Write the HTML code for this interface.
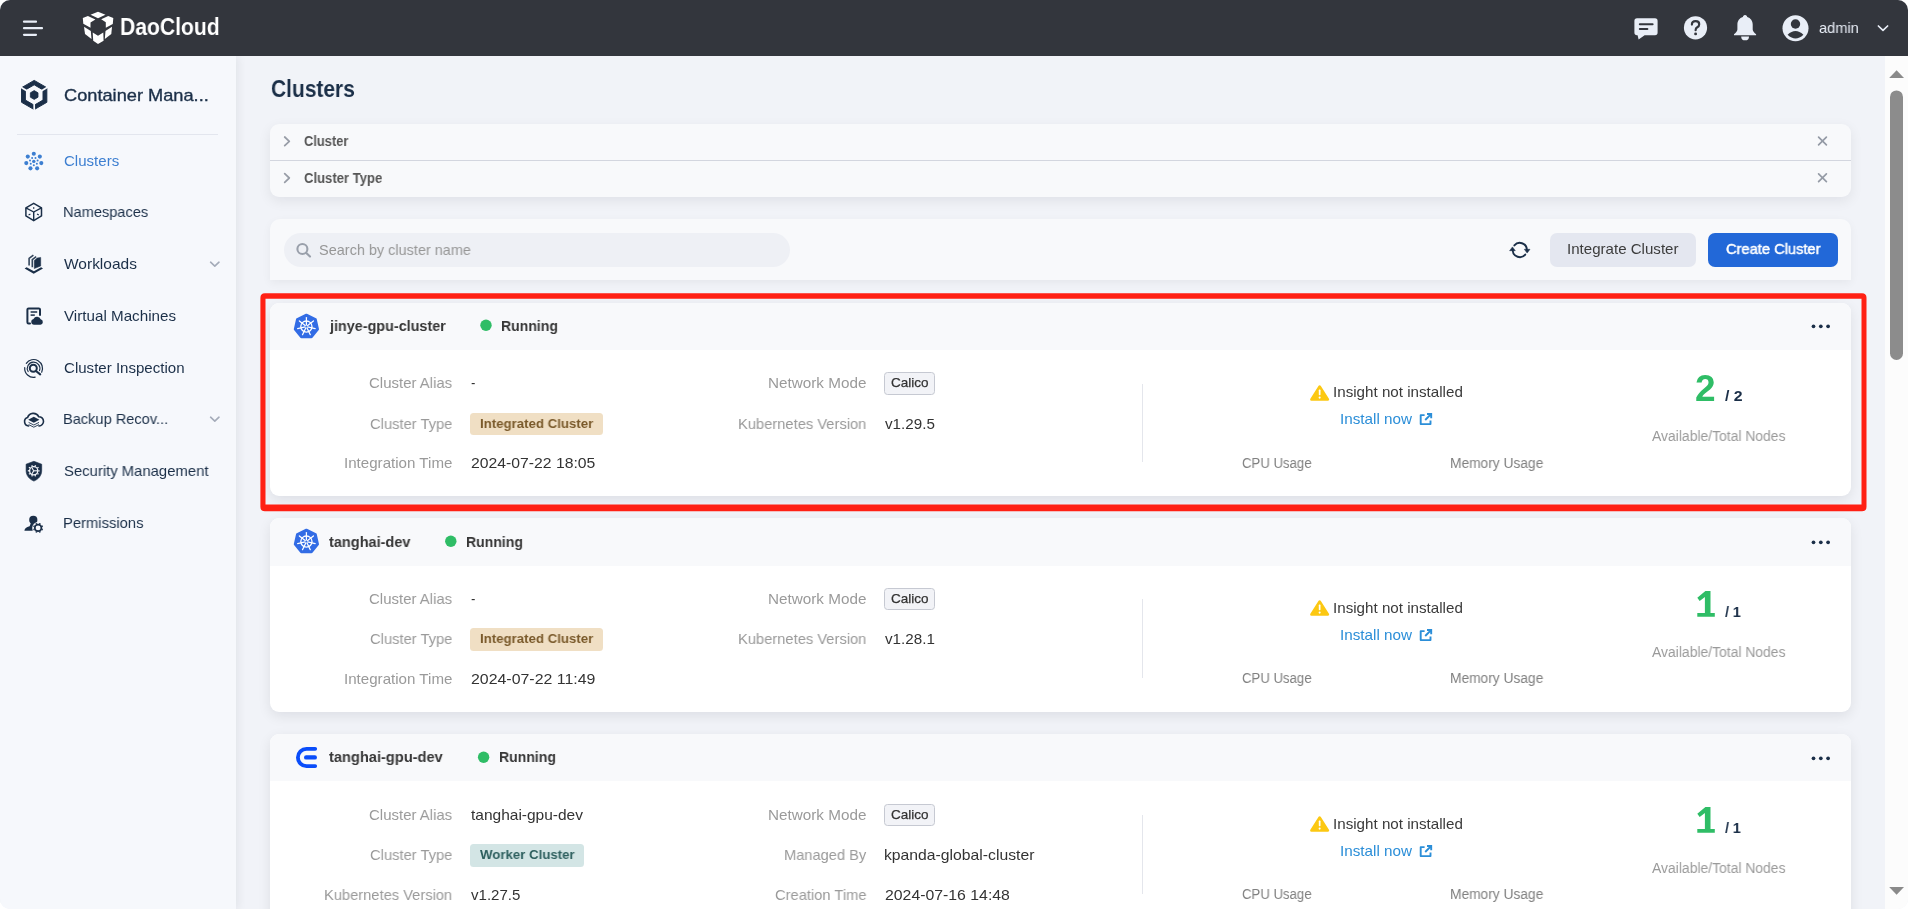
<!DOCTYPE html><html><head><meta charset="utf-8"><title>Clusters</title><style>
*{box-sizing:border-box}
html,body{margin:0;padding:0;background:#fff}
body{width:1908px;height:909px;overflow:hidden;position:relative;font-family:"Liberation Sans",sans-serif}
#app{position:absolute;left:0;top:0;width:1908px;height:909px;border-radius:10px;overflow:hidden;background:#f1f3f8}
.abs{position:absolute}
.t{position:absolute;white-space:pre;line-height:normal;transform-origin:0 0;will-change:transform;font-family:"Liberation Sans",sans-serif}
#hdr{left:0;top:0;width:1908px;height:55.5px;background:#33363d}
#side{left:0;top:55.5px;width:236px;height:854px;background:#f6f8fc;box-shadow:2px 0 9px rgba(20,25,45,.07)}
#sdiv{left:17px;top:133.5px;width:201px;height:1px;background:#e3e6ee}
#sbar{left:1885px;top:55.5px;width:23px;height:854px;background:#fcfcfc}
.card{left:270px;width:1581px;border-radius:9px;background:#fff;box-shadow:0 4px 13px rgba(10,12,22,.085);overflow:hidden}
.card .h{position:absolute;left:0;top:0;width:100%;height:47px;background:#f8f9fb}
#filt{left:270px;top:124.3px;width:1581px;height:72.4px;border-radius:9px;background:#f8f9fb;box-shadow:0 4px 13px rgba(10,12,22,.075)}
#filt i{position:absolute;left:0;top:35.6px;width:100%;height:1px;background:#d3d6df}
#tool{left:270px;top:218.8px;width:1581px;height:61.2px;border-radius:10px 10px 0 0;background:#f8f9fb;box-shadow:0 3px 10px rgba(10,12,22,.05)}
#srch{left:284px;top:233px;width:506px;height:34px;border-radius:17px;background:#eef0f5}
.btn{top:233px;height:34px;border-radius:7px}
.vdiv{left:1142px;width:1px;height:78px;background:#e4e6ec}
.tag{height:21.6px;border-radius:3.5px}
.cal{left:884px;width:51px;height:22.8px;border:1px solid #c6c9d2;border-radius:3.5px;background:#f2f3f7}
#red{left:260.5px;top:293.2px;width:1606px;height:217.3px;border:5px solid #ff2014;border-radius:4px}
</style></head><body><div id="app">
<div class="abs" id="side"></div><div class="abs" id="sdiv"></div>
<div class="abs" id="hdr"></div>
<div class="abs" id="filt"><i></i></div>
<div class="abs" id="tool"></div><div class="abs" id="srch"></div>
<div class="abs btn" style="left:1550px;width:146px;background:#e4e7f0"></div>
<div class="abs btn" style="left:1708px;width:130px;background:#2268d8"></div>
<div class="abs card" style="top:302.5px;height:193px"><div class="h" style="height:47px"></div></div>
<div class="abs vdiv" style="top:384px;height:78px"></div>
<div class="abs cal" style="top:372px;height:22.8px"></div>
<div class="abs tag" style="left:470px;top:413px;height:21.6px;width:132.8px;background:#f0dfc4"></div>
<div class="abs card" style="top:517.75px;height:193.75px"><div class="h" style="height:47.75px"></div></div>
<div class="abs vdiv" style="top:599px;height:79px"></div>
<div class="abs cal" style="top:588px;height:21.6px"></div>
<div class="abs tag" style="left:470px;top:628.25px;height:22.25px;width:132.8px;background:#f0dfc4"></div>
<div class="abs card" style="top:733.75px;height:193.75px"><div class="h" style="height:47px"></div></div>
<div class="abs vdiv" style="top:815px;height:79px"></div>
<div class="abs cal" style="top:804px;height:21.6px"></div>
<div class="abs tag" style="left:470px;top:844.25px;height:22.25px;width:113.8px;background:#d3e5e5"></div>
<div class="abs" id="sbar"></div>
<svg class="abs" style="left:0;top:0" width="1908" height="909" viewBox="0 0 1908 909"><line x1="24" y1="21.7" x2="36" y2="21.7" stroke="#e9eef7" stroke-width="2.2" stroke-linecap="round"/><line x1="24" y1="28.2" x2="42" y2="28.2" stroke="#e9eef7" stroke-width="2.2" stroke-linecap="round"/><line x1="24" y1="34.8" x2="36" y2="34.8" stroke="#e9eef7" stroke-width="2.2" stroke-linecap="round"/><polygon points="90.5,14.7 98,11.8 105.5,14.7 98,18.3" fill="#fff"/><polygon points="82.8,17.9 87.9,15.9 95.4,19.5 90.5,22.4 90.5,27.8 83.3,23.7" fill="#fff"/><polygon points="113.3,17.9 108.2,15.9 101.2,19.3 105.8,22.2 105.8,27.8 112.8,23.9" fill="#fff"/><polygon points="84,26.8 90.8,30.9 91.5,38.9 85,34.1" fill="#fff"/><polygon points="112,26.8 105.5,30.9 104.8,38.9 111.3,34.1" fill="#fff"/><polygon points="92.7,32.6 98,35.8 103.3,32.6 103.6,40.8 98,44 93.2,40.8" fill="#fff"/><path d="M1637 18.3 H1655 Q1657.6 18.3 1657.6 20.9 V32.6 Q1657.6 35.2 1655 35.2 H1644.6 L1638.6 39.6 L1637.6 35.2 H1637 Q1634.4 35.2 1634.4 32.6 V20.9 Q1634.4 18.3 1637 18.3Z" fill="#e9eef7"/><line x1="1639.8" y1="24.3" x2="1652.6" y2="24.3" stroke="#33363d" stroke-width="2" stroke-linecap="round"/><line x1="1639.8" y1="29.1" x2="1647.4" y2="29.1" stroke="#33363d" stroke-width="2" stroke-linecap="round"/><circle cx="1695.5" cy="27.8" r="11.6" fill="#e9eef7"/><path d="M1691.9 24.6 Q1691.9 21.2 1695.6 21.2 Q1699.2 21.2 1699.2 24.3 Q1699.2 26.2 1697.3 27.3 Q1695.6 28.3 1695.6 30.2" fill="none" stroke="#33363d" stroke-width="2.2" stroke-linecap="round"/><circle cx="1695.6" cy="33.9" r="1.45" fill="#33363d"/><path d="M1745 15 C1743.6 15 1743 16 1742.9 17 C1739.4 18 1737.4 21 1737.4 24.6 V29.4 C1737.4 31.2 1735.6 32.6 1734 34.2 V35.3 H1756.1 V34.2 C1754.5 32.6 1752.7 31.2 1752.7 29.4 V24.6 C1752.7 21 1750.7 18 1747.2 17 C1747.1 16 1746.5 15 1745 15Z" fill="#e9eef7"/><path d="M1741.2 36.4 A3.9 3.9 0 0 0 1749 36.4Z" fill="#e9eef7"/><circle cx="1795.5" cy="28.2" r="13" fill="#e9eef7"/><circle cx="1795.5" cy="24" r="4.7" fill="#33363d"/><path d="M1787.6 34.7 Q1795.5 27.2 1803.4 34.7 Q1795.5 42.2 1787.6 34.7Z" fill="#33363d"/><path d="M1878.4 26 L1883 30.4 L1887.6 26" fill="none" stroke="#e9eef7" stroke-width="1.7" stroke-linecap="round" stroke-linejoin="round"/><path d="M34.20 80.40 L46.84 87.70 L46.84 102.30 L34.20 109.60 L21.56 102.30 L21.56 87.70Z M25.37 89.90 L25.37 100.10 L34.20 105.20 L43.03 100.10 L43.03 89.90 L34.20 84.80Z" fill="#1b2f48" fill-rule="evenodd" stroke="#1b2f48" stroke-width="1" stroke-linejoin="round"/><line x1="34.2" y1="103" x2="34.2" y2="111" stroke="#f6f8fc" stroke-width="1.7"/><line x1="27.20" y1="91.00" x2="19.70" y2="86.60" stroke="#f6f8fc" stroke-width="1.7"/><line x1="41.20" y1="91.00" x2="48.70" y2="86.60" stroke="#f6f8fc" stroke-width="1.7"/><polygon points="34.20,90.60 38.01,92.80 38.01,97.20 34.20,99.40 30.39,97.20 30.39,92.80" fill="#1b2f48" stroke="#1b2f48" stroke-width="0.8" stroke-linejoin="round"/><circle cx="33.80" cy="153.70" r="2.05" fill="#3d7fd1"/><circle cx="35.49" cy="157.89" r="1.0" fill="#3d7fd1"/><circle cx="39.82" cy="156.60" r="2.05" fill="#3d7fd1"/><circle cx="37.60" cy="160.53" r="1.0" fill="#3d7fd1"/><circle cx="41.31" cy="163.11" r="2.05" fill="#3d7fd1"/><circle cx="36.85" cy="163.83" r="1.0" fill="#3d7fd1"/><circle cx="37.14" cy="168.34" r="2.05" fill="#3d7fd1"/><circle cx="33.80" cy="165.30" r="1.0" fill="#3d7fd1"/><circle cx="30.46" cy="168.34" r="2.05" fill="#3d7fd1"/><circle cx="30.75" cy="163.83" r="1.0" fill="#3d7fd1"/><circle cx="26.29" cy="163.11" r="2.05" fill="#3d7fd1"/><circle cx="30.00" cy="160.53" r="1.0" fill="#3d7fd1"/><circle cx="27.78" cy="156.60" r="2.05" fill="#3d7fd1"/><circle cx="32.11" cy="157.89" r="1.0" fill="#3d7fd1"/><circle cx="33.8" cy="161.4" r="1.7" fill="#3d7fd1"/><polygon points="33.70,203.30 41.50,207.90 41.50,215.90 33.70,220.70 25.90,215.90 25.90,207.90" fill="none" stroke="#1b2f48" stroke-width="1.5" stroke-linejoin="round"/><line x1="33.7" y1="212.0" x2="25.90" y2="207.90" stroke="#1b2f48" stroke-width="1.4"/><line x1="33.7" y1="212.0" x2="41.50" y2="207.90" stroke="#1b2f48" stroke-width="1.4"/><line x1="33.7" y1="212.0" x2="33.70" y2="220.70" stroke="#1b2f48" stroke-width="1.4"/><line x1="33.7" y1="207.2" x2="33.7" y2="208.8" stroke="#1b2f48" stroke-width="1.3"/><line x1="28.6" y1="214.9" x2="30.4" y2="213.9" stroke="#1b2f48" stroke-width="1.1"/><line x1="38.8" y1="214.9" x2="37" y2="213.9" stroke="#1b2f48" stroke-width="1.1"/><polygon points="34.3,260.4 37.2,258 40.7,257.4 40.7,266 34.3,268.6" fill="#1b2f48" stroke="#1b2f48" stroke-width="0.5" stroke-linejoin="round"/><path d="M29.1 265.6 V258.4 L33.4 255.1 M32.3 267.2 V259.6 L36.2 256.7" fill="none" stroke="#34465c" stroke-width="1.6" stroke-linejoin="round"/><polygon points="24.6,268.5 26.6,267.3 33.9,271.3 41.1,267.3 43,268.5 33.7,273.7" fill="#1b2f48"/><path d="M30 323.5 H28.6 Q27.4 323.5 27.4 322.3 V309.6 Q27.4 308.4 28.6 308.4 H38.8 Q40 308.4 40 309.6 V315" fill="none" stroke="#1b2f48" stroke-width="2" stroke-linecap="round"/><line x1="30.6" y1="312" x2="37.2" y2="312" stroke="#1b2f48" stroke-width="1.5"/><line x1="30.6" y1="315.1" x2="34.8" y2="315.1" stroke="#1b2f48" stroke-width="1.5"/><path d="M33.8 324.8 A3 3 0 0 1 33.5 318.9 A3.9 3.9 0 0 1 40.7 319.3 A2.8 2.8 0 0 1 40.4 324.8Z" fill="#1b2f48"/><circle cx="33.3" cy="368.3" r="3.5" fill="none" stroke="#1b2f48" stroke-width="2"/><line x1="36" y1="371" x2="40.2" y2="374.4" stroke="#1b2f48" stroke-width="2.1" stroke-linecap="round"/><path d="M28.14 371.55 A6.3 6.3 0 1 1 39.52 370.55" fill="none" stroke="#1b2f48" stroke-width="1.15" stroke-linecap="round"/><path d="M26.31 363.30 A8.9 8.9 0 0 1 41.67 372.16" fill="none" stroke="#1b2f48" stroke-width="1.2" stroke-linecap="round"/><path d="M35.15 377.16 A8.9 8.9 0 0 1 24.73 367.62" fill="none" stroke="#1b2f48" stroke-width="1.2" stroke-linecap="round"/><path d="M28.6 426 A4.3 4.3 0 0 1 27.6 417.6 A6.0 6.0 0 0 1 38.7 416.7 A4.65 4.65 0 0 1 39.0 426" fill="none" stroke="#1b2f48" stroke-width="1.6" stroke-linecap="round"/><path d="M33.8 416.8 L39.4 419.8 L33.8 422.8 L28.2 419.8Z" fill="#1b2f48"/><path d="M28.6 422.4 L33.8 425 L39 422.4 M28.6 424.6 L33.8 427.2 L39 424.6" fill="none" stroke="#1b2f48" stroke-width="0.9"/><path d="M33.9 461.3 L41.7 464.2 V470.6 C41.7 475.6 38.4 479.3 33.9 481.1 C29.4 479.3 26.1 475.6 26.1 470.6 V464.2Z" fill="#1b2f48" stroke="#1b2f48" stroke-width="0.6" stroke-linejoin="round"/><circle cx="33.7" cy="470.8" r="4.1" fill="none" stroke="#f6f8fc" stroke-width="1.3"/><line x1="38.30" y1="470.80" x2="39.60" y2="470.80" stroke="#f6f8fc" stroke-width="1.3"/><line x1="37.42" y1="473.50" x2="38.47" y2="474.27" stroke="#f6f8fc" stroke-width="1.3"/><line x1="35.12" y1="475.17" x2="35.52" y2="476.41" stroke="#f6f8fc" stroke-width="1.3"/><line x1="32.28" y1="475.17" x2="31.88" y2="476.41" stroke="#f6f8fc" stroke-width="1.3"/><line x1="29.98" y1="473.50" x2="28.93" y2="474.27" stroke="#f6f8fc" stroke-width="1.3"/><line x1="29.10" y1="470.80" x2="27.80" y2="470.80" stroke="#f6f8fc" stroke-width="1.3"/><line x1="29.98" y1="468.10" x2="28.93" y2="467.33" stroke="#f6f8fc" stroke-width="1.3"/><line x1="32.28" y1="466.43" x2="31.88" y2="465.19" stroke="#f6f8fc" stroke-width="1.3"/><line x1="35.12" y1="466.43" x2="35.52" y2="465.19" stroke="#f6f8fc" stroke-width="1.3"/><line x1="37.42" y1="468.10" x2="38.47" y2="467.33" stroke="#f6f8fc" stroke-width="1.3"/><line x1="33.70" y1="470.80" x2="37.30" y2="470.80" stroke="#f6f8fc" stroke-width="1.1"/><line x1="33.70" y1="470.80" x2="31.90" y2="473.92" stroke="#f6f8fc" stroke-width="1.1"/><line x1="33.70" y1="470.80" x2="31.90" y2="467.68" stroke="#f6f8fc" stroke-width="1.1"/><circle cx="33.3" cy="519.9" r="4.1" fill="#1b2f48"/><path d="M24.4 530.8 Q24.6 527.4 29.6 526.2 L31 522.8 H35.6 L34.4 526.6 L32.6 530.8Z" fill="#1b2f48"/><circle cx="38.1" cy="527.9" r="5.9" fill="#f6f8fc"/><circle cx="38.1" cy="527.9" r="3.3" fill="none" stroke="#1b2f48" stroke-width="1.7"/><line x1="41.61" y1="529.35" x2="42.72" y2="529.81" stroke="#1b2f48" stroke-width="1.7"/><line x1="39.55" y1="531.41" x2="40.01" y2="532.52" stroke="#1b2f48" stroke-width="1.7"/><line x1="36.65" y1="531.41" x2="36.19" y2="532.52" stroke="#1b2f48" stroke-width="1.7"/><line x1="34.59" y1="529.35" x2="33.48" y2="529.81" stroke="#1b2f48" stroke-width="1.7"/><line x1="34.59" y1="526.45" x2="33.48" y2="525.99" stroke="#1b2f48" stroke-width="1.7"/><line x1="36.65" y1="524.39" x2="36.19" y2="523.28" stroke="#1b2f48" stroke-width="1.7"/><line x1="39.55" y1="524.39" x2="40.01" y2="523.28" stroke="#1b2f48" stroke-width="1.7"/><line x1="41.61" y1="526.45" x2="42.72" y2="525.99" stroke="#1b2f48" stroke-width="1.7"/><path d="M210.6 262.2 L214.8 266.2 L219 262.2" fill="none" stroke="#a4abb9" stroke-width="1.6" stroke-linecap="round" stroke-linejoin="round"/><path d="M210.6 417.2 L214.8 421.2 L219 417.2" fill="none" stroke="#a4abb9" stroke-width="1.6" stroke-linecap="round" stroke-linejoin="round"/><path d="M284.7 137.0 L289.3 141.3 L284.7 145.60000000000002" fill="none" stroke="#989da7" stroke-width="1.75" stroke-linecap="round" stroke-linejoin="round"/><path d="M1818.6 137.1 L1826.4 144.9 M1826.4 137.1 L1818.6 144.9" fill="none" stroke="#959ba6" stroke-width="1.7" stroke-linecap="round"/><path d="M284.7 173.7 L289.3 178 L284.7 182.3" fill="none" stroke="#989da7" stroke-width="1.75" stroke-linecap="round" stroke-linejoin="round"/><path d="M1818.6 173.79999999999998 L1826.4 181.6 M1826.4 173.79999999999998 L1818.6 181.6" fill="none" stroke="#959ba6" stroke-width="1.7" stroke-linecap="round"/><circle cx="302.4" cy="249" r="5.0" fill="none" stroke="#9aa0ab" stroke-width="2.1"/><line x1="306.3" y1="253" x2="310" y2="256.6" stroke="#9aa0ab" stroke-width="2.1" stroke-linecap="round"/><path d="M1514.36 245.44 A7.1 7.1 0 0 1 1526.88 249.50" fill="none" stroke="#1b2f48" stroke-width="1.9" stroke-linecap="round"/><path d="M1525.24 254.56 A7.1 7.1 0 0 1 1512.72 250.50" fill="none" stroke="#1b2f48" stroke-width="1.9" stroke-linecap="round"/><path d="M1524.3 249.3 H1530 L1527.15 253.1Z" fill="#1b2f48" stroke="#1b2f48" stroke-width="0.5" stroke-linejoin="round"/><path d="M1509.6 250.7 H1515.3 L1512.45 246.9Z" fill="#1b2f48" stroke="#1b2f48" stroke-width="0.5" stroke-linejoin="round"/><path d="M306.40 315.00 L315.47 319.37 L317.71 329.18 L311.43 337.05 L301.37 337.05 L295.09 329.18 L297.33 319.37Z" fill="#326ce5" stroke="#326ce5" stroke-width="2.6" stroke-linejoin="round"/><circle cx="306.4" cy="326.6" r="5.6" fill="none" stroke="#fff" stroke-width="1.3"/><line x1="306.40" y1="325.40" x2="306.40" y2="317.60" stroke="#fff" stroke-width="1.25" stroke-linecap="round"/><line x1="307.34" y1="325.85" x2="313.44" y2="320.99" stroke="#fff" stroke-width="1.25" stroke-linecap="round"/><line x1="307.57" y1="326.87" x2="315.17" y2="328.60" stroke="#fff" stroke-width="1.25" stroke-linecap="round"/><line x1="306.92" y1="327.68" x2="310.30" y2="334.71" stroke="#fff" stroke-width="1.25" stroke-linecap="round"/><line x1="305.88" y1="327.68" x2="302.50" y2="334.71" stroke="#fff" stroke-width="1.25" stroke-linecap="round"/><line x1="305.23" y1="326.87" x2="297.63" y2="328.60" stroke="#fff" stroke-width="1.25" stroke-linecap="round"/><line x1="305.46" y1="325.85" x2="299.36" y2="320.99" stroke="#fff" stroke-width="1.25" stroke-linecap="round"/><circle cx="306.4" cy="326.6" r="1.0" fill="#326ce5"/><path d="M306.40 530.00 L315.47 534.37 L317.71 544.18 L311.43 552.05 L301.37 552.05 L295.09 544.18 L297.33 534.37Z" fill="#326ce5" stroke="#326ce5" stroke-width="2.6" stroke-linejoin="round"/><circle cx="306.4" cy="541.6" r="5.6" fill="none" stroke="#fff" stroke-width="1.3"/><line x1="306.40" y1="540.40" x2="306.40" y2="532.60" stroke="#fff" stroke-width="1.25" stroke-linecap="round"/><line x1="307.34" y1="540.85" x2="313.44" y2="535.99" stroke="#fff" stroke-width="1.25" stroke-linecap="round"/><line x1="307.57" y1="541.87" x2="315.17" y2="543.60" stroke="#fff" stroke-width="1.25" stroke-linecap="round"/><line x1="306.92" y1="542.68" x2="310.30" y2="549.71" stroke="#fff" stroke-width="1.25" stroke-linecap="round"/><line x1="305.88" y1="542.68" x2="302.50" y2="549.71" stroke="#fff" stroke-width="1.25" stroke-linecap="round"/><line x1="305.23" y1="541.87" x2="297.63" y2="543.60" stroke="#fff" stroke-width="1.25" stroke-linecap="round"/><line x1="305.46" y1="540.85" x2="299.36" y2="535.99" stroke="#fff" stroke-width="1.25" stroke-linecap="round"/><circle cx="306.4" cy="541.6" r="1.0" fill="#326ce5"/><path d="M315.2 748.80 H306.55 A8.65 8.65 0 0 0 306.55 766.10 H315.2" fill="none" stroke="#0a4dfa" stroke-width="3.8" stroke-linecap="round"/><line x1="306.2" y1="757.40" x2="314.8" y2="757.40" stroke="#0a4dfa" stroke-width="4.4" stroke-linecap="round"/><circle cx="486.0" cy="325.2" r="5.7" fill="#2fbd66"/><circle cx="1813.5" cy="326.3" r="1.85" fill="#1b2f48"/><circle cx="1820.8" cy="326.3" r="1.85" fill="#1b2f48"/><circle cx="1828.1" cy="326.3" r="1.85" fill="#1b2f48"/><path d="M1319.65 386.5 L1327.9 399.5 H1311.4 Z" fill="#fcc812" stroke="#fcc812" stroke-width="2.5" stroke-linejoin="round"/><rect x="1318.8" y="389.6" width="1.7" height="5.6" rx=".6" fill="#fff"/><circle cx="1319.65" cy="397.6" r="1.05" fill="#fff"/><path d="M1424.6 415.1 H1420.7 V424.1 H1430.5 V420.4" fill="none" stroke="#2b8ed8" stroke-width="1.9" stroke-linejoin="round" stroke-linecap="butt"/><path d="M1427 414.0 H1431.2 V418.2 M1430.8 414.4 L1425.2 420.0" fill="none" stroke="#2b8ed8" stroke-width="1.9" stroke-linecap="butt" stroke-linejoin="miter"/><circle cx="450.8" cy="541.2" r="5.7" fill="#2fbd66"/><circle cx="1813.5" cy="542.3" r="1.85" fill="#1b2f48"/><circle cx="1820.8" cy="542.3" r="1.85" fill="#1b2f48"/><circle cx="1828.1" cy="542.3" r="1.85" fill="#1b2f48"/><path d="M1319.65 601.5 L1327.9 614.5 H1311.4 Z" fill="#fcc812" stroke="#fcc812" stroke-width="2.5" stroke-linejoin="round"/><rect x="1318.8" y="604.6" width="1.7" height="5.6" rx=".6" fill="#fff"/><circle cx="1319.65" cy="612.6" r="1.05" fill="#fff"/><path d="M1424.6 631.1 H1420.7 V640.1 H1430.5 V636.4" fill="none" stroke="#2b8ed8" stroke-width="1.9" stroke-linejoin="round" stroke-linecap="butt"/><path d="M1427 630.0 H1431.2 V634.2 M1430.8 630.4 L1425.2 636.0" fill="none" stroke="#2b8ed8" stroke-width="1.9" stroke-linecap="butt" stroke-linejoin="miter"/><path transform="translate(0 216)" fill="#2fbd66" d="M1705.4 375 H1710.5 V397 H1714.8 V400.8 H1697.3 V397 H1704.9 V380.9 L1699.7 385 L1697.3 381.7Z"/><circle cx="483.6" cy="757.2" r="5.7" fill="#2fbd66"/><circle cx="1813.5" cy="758.3" r="1.85" fill="#1b2f48"/><circle cx="1820.8" cy="758.3" r="1.85" fill="#1b2f48"/><circle cx="1828.1" cy="758.3" r="1.85" fill="#1b2f48"/><path d="M1319.65 817.5 L1327.9 830.5 H1311.4 Z" fill="#fcc812" stroke="#fcc812" stroke-width="2.5" stroke-linejoin="round"/><rect x="1318.8" y="820.6" width="1.7" height="5.6" rx=".6" fill="#fff"/><circle cx="1319.65" cy="828.6" r="1.05" fill="#fff"/><path d="M1424.6 847.1 H1420.7 V856.1 H1430.5 V852.4" fill="none" stroke="#2b8ed8" stroke-width="1.9" stroke-linejoin="round" stroke-linecap="butt"/><path d="M1427 846.0 H1431.2 V850.2 M1430.8 846.4 L1425.2 852.0" fill="none" stroke="#2b8ed8" stroke-width="1.9" stroke-linecap="butt" stroke-linejoin="miter"/><path transform="translate(0 432)" fill="#2fbd66" d="M1705.4 375 H1710.5 V397 H1714.8 V400.8 H1697.3 V397 H1704.9 V380.9 L1699.7 385 L1697.3 381.7Z"/><path fill-rule="evenodd" fill="#ff2014" d="M264.9 293.3 H1862 Q1866.5 293.3 1866.5 297.8 V506.7 Q1866.5 511.2 1862 511.2 H264.9 Q260.4 511.2 260.4 506.7 V297.8 Q260.4 293.3 264.9 293.3Z M265.5 298.8 V504.6 H1861.5 V298.8Z"/><path d="M1889.2 78 L1896.6 70.2 L1904 78Z" fill="#8a8a8a"/><path d="M1889.2 887 L1896.6 894.8 L1904 887Z" fill="#8a8a8a"/><rect x="1890" y="90.4" width="13" height="269.6" rx="6.5" fill="#8c8c8c"/></svg>
<span class="t" style="left:119.64px;top:12.8px;font-size:24.5px;font-weight:700;color:#fff;transform:scaleX(0.8618);">DaoCloud</span>
<span class="t" style="left:1818.50px;top:19.2px;font-size:15px;font-weight:400;color:#e9eef7;transform:scaleX(0.9750);">admin</span>
<span class="t" style="left:63.50px;top:85.7px;font-size:17px;font-weight:400;color:#1b2f48;transform:scaleX(1.0714);-webkit-text-stroke:0.35px #1b2f48;">Container Mana...</span>
<span class="t" style="left:63.50px;top:152.0px;font-size:15px;font-weight:400;color:#3d7fd1;transform:scaleX(1.0034);">Clusters</span>
<span class="t" style="left:62.53px;top:203.0px;font-size:15px;font-weight:400;color:#1b2f48;transform:scaleX(0.9728);">Namespaces</span>
<span class="t" style="left:63.50px;top:255.0px;font-size:15px;font-weight:400;color:#1b2f48;transform:scaleX(1.0331);">Workloads</span>
<span class="t" style="left:63.50px;top:307.0px;font-size:15px;font-weight:400;color:#1b2f48;transform:scaleX(1.0126);">Virtual Machines</span>
<span class="t" style="left:63.50px;top:359.0px;font-size:15px;font-weight:400;color:#1b2f48;transform:scaleX(1.0040);">Cluster Inspection</span>
<span class="t" style="left:62.53px;top:410.0px;font-size:15px;font-weight:400;color:#1b2f48;transform:scaleX(0.9732);">Backup Recov...</span>
<span class="t" style="left:63.50px;top:462.0px;font-size:15px;font-weight:400;color:#1b2f48;transform:scaleX(0.9902);">Security Management</span>
<span class="t" style="left:62.51px;top:514.0px;font-size:15px;font-weight:400;color:#1b2f48;transform:scaleX(0.9852);">Permissions</span>
<span class="t" style="left:270.50px;top:75.0px;font-size:24px;font-weight:700;color:#1b2f48;transform:scaleX(0.8726);">Clusters</span>
<span class="t" style="left:304.30px;top:133.2px;font-size:14.5px;font-weight:700;color:#555;transform:scaleX(0.8884);">Cluster</span>
<span class="t" style="left:304.30px;top:170.0px;font-size:14.5px;font-weight:700;color:#555;transform:scaleX(0.9021);">Cluster Type</span>
<span class="t" style="left:318.50px;top:241.5px;font-size:14.5px;font-weight:400;color:#969696;transform:scaleX(0.9970);">Search by cluster name</span>
<span class="t" style="left:1566.99px;top:240.0px;font-size:15px;font-weight:400;color:#3c3c3c;transform:scaleX(1.0055);">Integrate Cluster</span>
<span class="t" style="left:1725.50px;top:240.0px;font-size:15px;font-weight:400;color:#fff;transform:scaleX(0.9772);-webkit-text-stroke:0.5px #fff;">Create Cluster</span>
<span class="t" style="left:329.56px;top:317.3px;font-size:15px;font-weight:700;color:#363636;transform:scaleX(0.9581);">jinye-gpu-cluster</span>
<span class="t" style="left:501.26px;top:317.3px;font-size:15px;font-weight:700;color:#363636;transform:scaleX(0.9355);">Running</span>
<span class="t" style="left:368.50px;top:374.4px;font-size:15px;font-weight:400;color:#9a9a9a;transform:scaleX(0.9977);">Cluster Alias</span>
<span class="t" style="left:471.00px;top:374.4px;font-size:15px;font-weight:400;color:#333;transform:scaleX(0.9000);">-</span>
<span class="t" style="left:369.70px;top:415.2px;font-size:15px;font-weight:400;color:#9a9a9a;transform:scaleX(0.9814);">Cluster Type</span>
<span class="t" style="left:479.50px;top:416.2px;font-size:13.5px;font-weight:700;color:#7a5a2b;transform:scaleX(0.9805);">Integrated Cluster</span>
<span class="t" style="left:343.69px;top:454.4px;font-size:15px;font-weight:400;color:#9a9a9a;transform:scaleX(1.0077);">Integration Time</span>
<span class="t" style="left:470.80px;top:454.4px;font-size:15px;font-weight:400;color:#333;transform:scaleX(1.0500);">2024-07-22 18:05</span>
<span class="t" style="left:768.28px;top:374.4px;font-size:15px;font-weight:400;color:#9a9a9a;transform:scaleX(1.0172);">Network Mode</span>
<span class="t" style="left:891.30px;top:375.2px;font-size:13.5px;font-weight:400;color:#333;transform:scaleX(0.9998);-webkit-text-stroke:0.25px #333;">Calico</span>
<span class="t" style="left:738.32px;top:415.2px;font-size:15px;font-weight:400;color:#9a9a9a;transform:scaleX(0.9801);">Kubernetes Version</span>
<span class="t" style="left:884.60px;top:415.2px;font-size:15px;font-weight:400;color:#333;transform:scaleX(1.0131);">v1.29.5</span>
<span class="t" style="left:1332.75px;top:384.0px;font-size:14.5px;font-weight:400;color:#3a3a3a;transform:scaleX(1.0457);">Insight not installed</span>
<span class="t" style="left:1340.25px;top:411.2px;font-size:14.5px;font-weight:400;color:#2b8ed8;transform:scaleX(1.0509);">Install now</span>
<span class="t" style="left:1241.50px;top:455.2px;font-size:14px;font-weight:400;color:#808080;transform:scaleX(0.9416);">CPU Usage</span>
<span class="t" style="left:1450.32px;top:455.2px;font-size:14px;font-weight:400;color:#808080;transform:scaleX(0.9827);">Memory Usage</span>
<span class="t" style="left:1651.80px;top:428.2px;font-size:14px;font-weight:400;color:#9a9a9a;transform:scaleX(0.9934);">Available/Total Nodes</span>
<span class="t" style="left:1695.20px;top:367.8px;font-size:37px;font-weight:700;color:#2fbd66;transform:scaleX(1.0000);">2</span>
<span class="t" style="left:1724.80px;top:386.8px;font-size:15.5px;font-weight:700;color:#1b2f48;transform:scaleX(1.0233);">/ 2</span>
<span class="t" style="left:328.60px;top:533.3px;font-size:15px;font-weight:700;color:#363636;transform:scaleX(0.9678);">tanghai-dev</span>
<span class="t" style="left:466.46px;top:533.3px;font-size:15px;font-weight:700;color:#363636;transform:scaleX(0.9355);">Running</span>
<span class="t" style="left:368.50px;top:590.4px;font-size:15px;font-weight:400;color:#9a9a9a;transform:scaleX(0.9977);">Cluster Alias</span>
<span class="t" style="left:471.00px;top:590.4px;font-size:15px;font-weight:400;color:#333;transform:scaleX(0.9000);">-</span>
<span class="t" style="left:369.70px;top:630.3px;font-size:15px;font-weight:400;color:#9a9a9a;transform:scaleX(0.9814);">Cluster Type</span>
<span class="t" style="left:479.50px;top:631.3px;font-size:13.5px;font-weight:700;color:#7a5a2b;transform:scaleX(0.9805);">Integrated Cluster</span>
<span class="t" style="left:343.69px;top:670.4px;font-size:15px;font-weight:400;color:#9a9a9a;transform:scaleX(1.0077);">Integration Time</span>
<span class="t" style="left:470.80px;top:670.4px;font-size:15px;font-weight:400;color:#333;transform:scaleX(1.0600);">2024-07-22 11:49</span>
<span class="t" style="left:768.28px;top:590.4px;font-size:15px;font-weight:400;color:#9a9a9a;transform:scaleX(1.0172);">Network Mode</span>
<span class="t" style="left:891.30px;top:591.2px;font-size:13.5px;font-weight:400;color:#333;transform:scaleX(0.9998);-webkit-text-stroke:0.25px #333;">Calico</span>
<span class="t" style="left:738.32px;top:630.3px;font-size:15px;font-weight:400;color:#9a9a9a;transform:scaleX(0.9801);">Kubernetes Version</span>
<span class="t" style="left:884.60px;top:630.3px;font-size:15px;font-weight:400;color:#333;transform:scaleX(1.0131);">v1.28.1</span>
<span class="t" style="left:1332.75px;top:600.0px;font-size:14.5px;font-weight:400;color:#3a3a3a;transform:scaleX(1.0457);">Insight not installed</span>
<span class="t" style="left:1340.25px;top:627.2px;font-size:14.5px;font-weight:400;color:#2b8ed8;transform:scaleX(1.0509);">Install now</span>
<span class="t" style="left:1241.50px;top:670.2px;font-size:14px;font-weight:400;color:#808080;transform:scaleX(0.9416);">CPU Usage</span>
<span class="t" style="left:1450.32px;top:670.2px;font-size:14px;font-weight:400;color:#808080;transform:scaleX(0.9827);">Memory Usage</span>
<span class="t" style="left:1651.80px;top:644.2px;font-size:14px;font-weight:400;color:#9a9a9a;transform:scaleX(0.9934);">Available/Total Nodes</span>
<span class="t" style="left:1724.80px;top:602.8px;font-size:15.5px;font-weight:700;color:#1b2f48;transform:scaleX(0.9198);">/ 1</span>
<span class="t" style="left:328.60px;top:748.3px;font-size:15px;font-weight:700;color:#363636;transform:scaleX(0.9751);">tanghai-gpu-dev</span>
<span class="t" style="left:498.76px;top:748.3px;font-size:15px;font-weight:700;color:#363636;transform:scaleX(0.9355);">Running</span>
<span class="t" style="left:368.50px;top:806.4px;font-size:15px;font-weight:400;color:#9a9a9a;transform:scaleX(0.9977);">Cluster Alias</span>
<span class="t" style="left:470.80px;top:806.4px;font-size:15px;font-weight:400;color:#333;transform:scaleX(1.0329);">tanghai-gpu-dev</span>
<span class="t" style="left:369.70px;top:846.3px;font-size:15px;font-weight:400;color:#9a9a9a;transform:scaleX(0.9814);">Cluster Type</span>
<span class="t" style="left:479.50px;top:847.3px;font-size:13.5px;font-weight:700;color:#2d5f5e;transform:scaleX(0.9807);">Worker Cluster</span>
<span class="t" style="left:324.22px;top:886.4px;font-size:15px;font-weight:400;color:#9a9a9a;transform:scaleX(0.9786);">Kubernetes Version</span>
<span class="t" style="left:470.80px;top:886.4px;font-size:15px;font-weight:400;color:#333;transform:scaleX(1.0028);">v1.27.5</span>
<span class="t" style="left:768.28px;top:806.4px;font-size:15px;font-weight:400;color:#9a9a9a;transform:scaleX(1.0172);">Network Mode</span>
<span class="t" style="left:891.30px;top:807.2px;font-size:13.5px;font-weight:400;color:#333;transform:scaleX(0.9998);-webkit-text-stroke:0.25px #333;">Calico</span>
<span class="t" style="left:783.62px;top:846.3px;font-size:15px;font-weight:400;color:#9a9a9a;transform:scaleX(0.9759);">Managed By</span>
<span class="t" style="left:883.55px;top:846.3px;font-size:15px;font-weight:400;color:#333;transform:scaleX(1.0490);">kpanda-global-cluster</span>
<span class="t" style="left:774.80px;top:886.4px;font-size:15px;font-weight:400;color:#9a9a9a;transform:scaleX(0.9807);">Creation Time</span>
<span class="t" style="left:884.60px;top:886.4px;font-size:15px;font-weight:400;color:#333;transform:scaleX(1.0543);">2024-07-16 14:48</span>
<span class="t" style="left:1332.75px;top:816.0px;font-size:14.5px;font-weight:400;color:#3a3a3a;transform:scaleX(1.0457);">Insight not installed</span>
<span class="t" style="left:1340.25px;top:843.2px;font-size:14.5px;font-weight:400;color:#2b8ed8;transform:scaleX(1.0509);">Install now</span>
<span class="t" style="left:1241.50px;top:886.2px;font-size:14px;font-weight:400;color:#808080;transform:scaleX(0.9416);">CPU Usage</span>
<span class="t" style="left:1450.32px;top:886.2px;font-size:14px;font-weight:400;color:#808080;transform:scaleX(0.9827);">Memory Usage</span>
<span class="t" style="left:1651.80px;top:860.2px;font-size:14px;font-weight:400;color:#9a9a9a;transform:scaleX(0.9934);">Available/Total Nodes</span>
<span class="t" style="left:1724.80px;top:818.8px;font-size:15.5px;font-weight:700;color:#1b2f48;transform:scaleX(0.9198);">/ 1</span>
</div></body></html>
